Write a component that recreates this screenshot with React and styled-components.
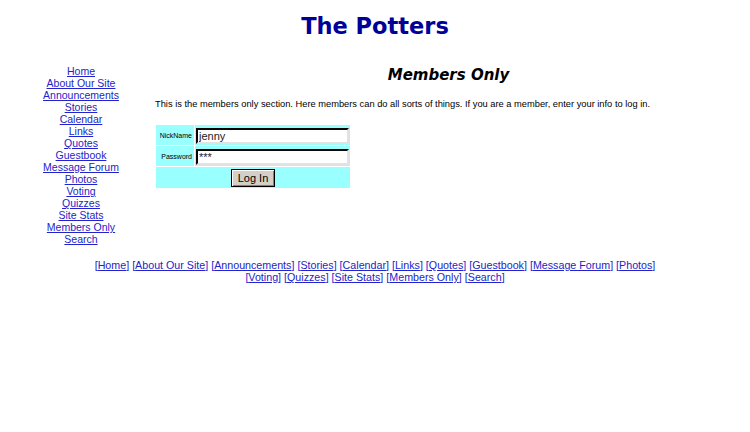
import React from "react";
import styled, { createGlobalStyle } from "styled-components";

const Global = createGlobalStyle`
  html, body { background: #ffffff; }
  body { margin: 8px; font-family: "Liberation Sans", Arial, sans-serif; color: #000; }
`;

const Title = styled.h1`
  margin: 4px 0 0;
  text-align: center;
  font-family: "DejaVu Sans", Verdana, sans-serif;
  font-weight: bold;
  font-size: 22.5px;
  line-height: 28px;
  color: #000099;
`;

const Layout = styled.div`
  display: flex;
  margin-top: 25px;
`;

const Sidebar = styled.nav`
  width: 146px;
  flex: none;
  display: flex;
  flex-direction: column;
  align-items: center;
`;

const SideLink = styled.a`
  display: block;
  font-size: 10.5px;
  line-height: 12px;
  color: #2323cc;
  text-decoration: underline;
`;

const Main = styled.main`
  flex: 1;
  padding-left: 1px;
`;

const Heading = styled.h2`
  margin: 1px 0 0;
  text-align: center;
  font-family: "DejaVu Sans", Verdana, sans-serif;
  font-style: italic;
  font-weight: bold;
  font-size: 15px;
  line-height: 18px;
`;

const Intro = styled.p`
  margin: 14px 0 0;
  font-size: 9.3px;
  line-height: 12px;
`;

const FormTable = styled.table`
  margin-top: 14px;
  border-collapse: separate;
  border-spacing: 1px;
  background: #ffffff;
`;

const Cell = styled.td`
  background: #99ffff;
  padding: 1px;
  height: ${(p) => p.$h || 18}px;
  text-align: ${(p) => p.$align || "left"};
  vertical-align: middle;
`;

const Label = styled.span`
  display: block;
  width: 34px;
  font-size: 7px;
  text-align: right;
  padding: 0 1px;
`;

const Field = styled.input`
  width: 153px;
  height: 16px;
  box-sizing: border-box;
  border: 2px inset #9a9a9a;
  border-color: #5a5a5a #e2e2e2 #e2e2e2 #5a5a5a;
  padding: 0 1px;
  font-family: "Liberation Sans", Arial, sans-serif;
  font-size: 11px;
  color: #222;
  background: #fff;
  outline: none;
`;

const Button = styled.button`
  font-family: "Liberation Sans", Arial, sans-serif;
  font-size: 11px;
  height: 18px;
  padding: 0 6px;
  background: #d4d0c8;
  border: 1px solid #000;
  box-shadow: inset 1px 1px 0 #ffffff, inset -1px -1px 0 #808080;
  color: #000;
`;

const Footer = styled.div`
  margin-top: 14px;
  text-align: center;
  font-size: 10.7px;
  line-height: 12px;
  padding: 0 80px;
  color: #2323cc;
`;

const FootLink = styled.a`
  color: #2323cc;
  text-decoration: underline;
`;

const pages = [
  "Home",
  "About Our Site",
  "Announcements",
  "Stories",
  "Calendar",
  "Links",
  "Quotes",
  "Guestbook",
  "Message Forum",
  "Photos",
  "Voting",
  "Quizzes",
  "Site Stats",
  "Members Only",
  "Search",
];

export default function App() {
  return (
    <>
      <Global />
      <Title>The Potters</Title>
      <Layout>
        <Sidebar>
          {pages.map((p) => (
            <SideLink key={p} href="#">
              {p}
            </SideLink>
          ))}
        </Sidebar>
        <Main>
          <Heading>Members Only</Heading>
          <Intro>
            This is the members only section. Here members can do all sorts of
            things. If you are a member, enter your info to log in.
          </Intro>
          <FormTable>
            <tbody>
              <tr>
                <Cell $h={18}>
                  <Label>NickName</Label>
                </Cell>
                <Cell>
                  <Field defaultValue="jenny" />
                </Cell>
              </tr>
              <tr>
                <Cell $h={17}>
                  <Label>Password</Label>
                </Cell>
                <Cell>
                  <Field defaultValue="***" readOnly />
                </Cell>
              </tr>
              <tr>
                <Cell colSpan={2} $align="center" $h={19}>
                  <Button>Log In</Button>
                </Cell>
              </tr>
            </tbody>
          </FormTable>
        </Main>
      </Layout>
      <Footer>
        {pages.map((p, i) => (
          <React.Fragment key={p}>
            [<FootLink href="#">{p}</FootLink>]{i < pages.length - 1 ? " " : ""}
          </React.Fragment>
        ))}
      </Footer>
    </>
  );
}
